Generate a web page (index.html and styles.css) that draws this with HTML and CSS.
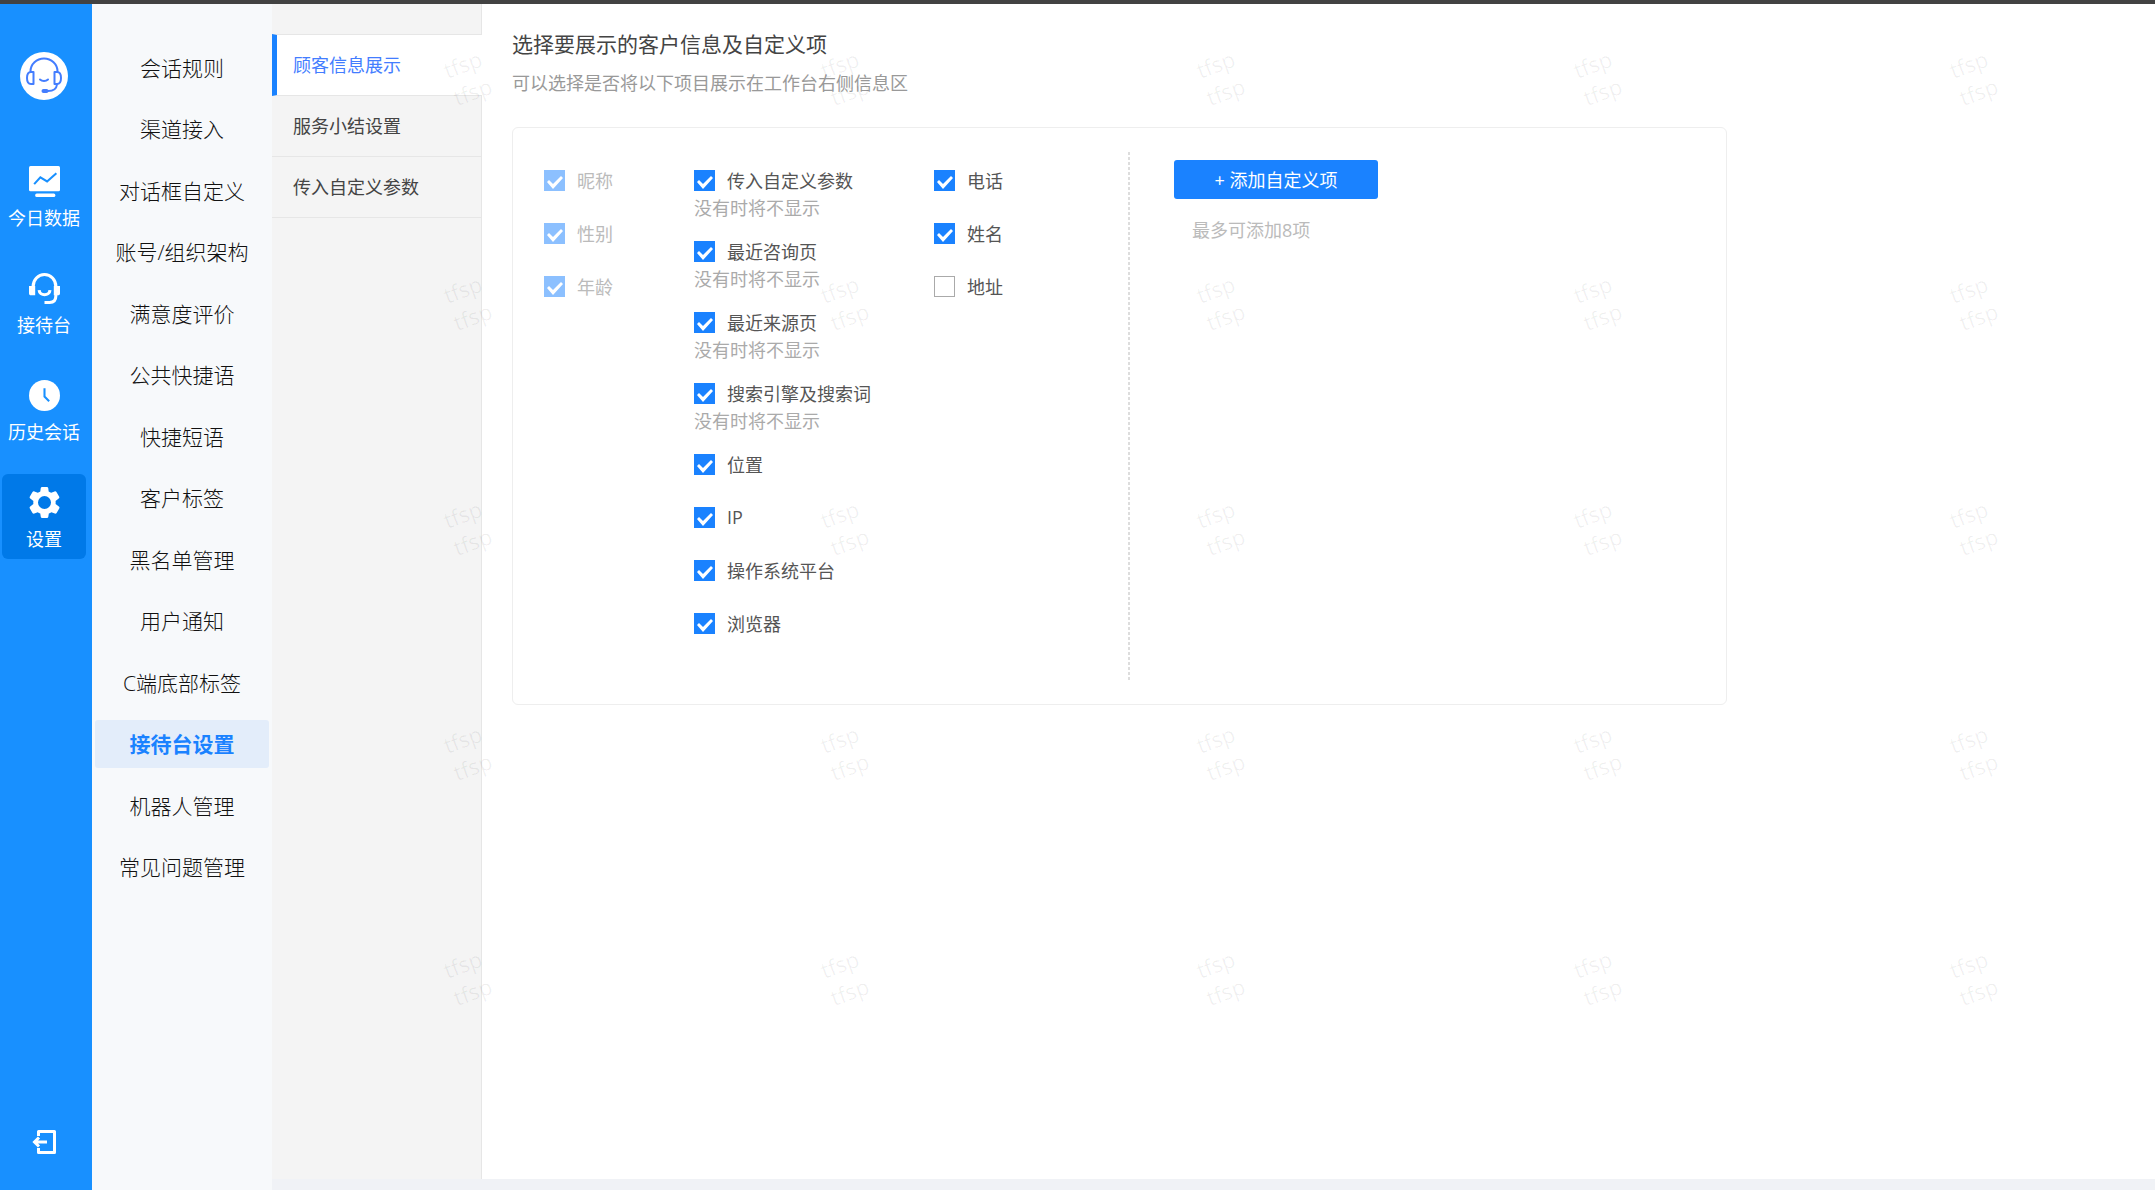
FILE: index.html
```html
<!DOCTYPE html>
<html lang="zh-CN">
<head>
<meta charset="utf-8">
<meta name="viewport" content="width=device-width, initial-scale=1">
<title>接待台设置</title>
<link rel="stylesheet" href="styles.css">
</head>
<body>
<div class="app">
  <nav class="rail" aria-label="主导航">
    <svg class="logo" viewBox="0 0 48 48" aria-hidden="true">
      <circle cx="24" cy="24" r="24" fill="#fff"/>
      <g fill="none" stroke="#437dff" stroke-width="2" stroke-linecap="round" stroke-linejoin="round">
        <path d="M10.500 19.500a13.500 13 0 0 1 27 0"/>
        <path d="M13.500 20v12h-2.500c-2.500 0-4-2.500-4-6s1.500-6 4-6z"/>
        <path d="M34.500 20v12h2.500c2.500 0 4-2.500 4-6s-1.500-6-4-6z"/>
        <path d="M20 27.500c2.200 2 5.800 2 8 0"/>
        <path d="M37 32.500c-.5 4.500-4 6.500-9 6.500"/>
      </g>
      <rect x="21.500" y="37" width="7" height="4" rx="2" fill="#437dff"/>
    </svg>
    <ul class="rail-list">
      <li><a class="rail-item" href="#data">
        <svg viewBox="0 0 30 30" aria-hidden="true"><rect width="30" height="24.500" rx="1.500" fill="#fff"/><rect x="6" y="26.500" width="19.500" height="3.500" rx="1.500" fill="#fff"/><path d="M5 17.500l6-6.500 6.500 4 9-8" fill="none" stroke="#1890ff" stroke-width="2"/></svg>
        <span>今日数据</span></a></li>
      <li><a class="rail-item" href="#desk">
        <svg viewBox="0 0 30 30" aria-hidden="true"><path d="M4 13a11 11.500 0 0 1 22 0v9c0 4-2 6.500-6 6.500h-5" fill="none" stroke="#fff" stroke-width="3"/><path d="M0 12.500h6v9H2c-1.300 0-2-.7-2-2zM30 12.500h-6v9h4c1.300 0 2-.7 2-2z" fill="#fff"/><path d="M9.800 16.500c.5 6 10 6 10.500 0" fill="none" stroke="#fff" stroke-width="3"/></svg>
        <span>接待台</span></a></li>
      <li><a class="rail-item" href="#history">
        <svg viewBox="0 0 30 30" aria-hidden="true"><circle cx="15" cy="15" r="15" fill="#fff"/><path d="M15 8v8l4.500 4.500" fill="none" stroke="#1890ff" stroke-width="2"/></svg>
        <span>历史会话</span></a></li>
      <li><a class="rail-item is-active" href="#settings" aria-current="page">
        <svg viewBox="2 2 20 20" aria-hidden="true"><path fill="#fff" d="M19.140 12.940c.04-.3.060-.61.060-.94s-.02-.64-.07-.94l2.030-1.580c.5-.4.500-.8.250-1.300l-1.700-2.900c-.25-.45-.7-.6-1.200-.4l-2.200.9c-.5-.38-1.030-.7-1.620-.94L14.400 2.600c-.1-.4-.4-.6-.8-.6h-3.200c-.4 0-.7.200-.8.600l-.31 2.240c-.59.240-1.130.570-1.620.940l-2.200-.9c-.5-.2-.95-.05-1.200.4l-1.700 2.900c-.25.500-.25.900.250 1.300l2.030 1.580c-.05.300-.09.630-.09.940s.02.640.07.940l-2.030 1.580c-.5.400-.5.800-.25 1.300l1.700 2.900c.25.450.7.600 1.200.4l2.200-.9c.5.380 1.030.7 1.620.94l.36 2.240c.1.400.4.600.8.600h3.200c.4 0 .7-.2.800-.6l.36-2.240c.59-.24 1.130-.56 1.620-.94l2.200.9c.5.200.95.050 1.200-.4l1.700-2.900c.25-.5.250-.9-.25-1.300zM12 16.200a4.200 4.200 0 1 1 0-8.400 4.200 4.200 0 0 1 0 8.400z"/></svg>
        <span>设置</span></a></li>
    </ul>
    <button class="logout" type="button" aria-label="退出">
      <svg viewBox="0 0 26 26" aria-hidden="true"><path d="M7.500 7V2.500h16v21h-16V19" fill="none" stroke="#fff" stroke-width="3" stroke-linejoin="round"/><path d="M4 13h12M8 8.500L3.500 13 8 17.500" fill="none" stroke="#fff" stroke-width="3"/></svg>
    </button>
  </nav>

  <nav class="menu" aria-label="设置菜单">
    <ul class="menu-list">
      <li><a href="#m1">会话规则</a></li>
      <li><a href="#m2">渠道接入</a></li>
      <li><a href="#m3">对话框自定义</a></li>
      <li><a href="#m4">账号/组织架构</a></li>
      <li><a href="#m5">满意度评价</a></li>
      <li><a href="#m6">公共快捷语</a></li>
      <li><a href="#m7">快捷短语</a></li>
      <li><a href="#m8">客户标签</a></li>
      <li><a href="#m9">黑名单管理</a></li>
      <li><a href="#m10">用户通知</a></li>
      <li><a href="#m11">C端底部标签</a></li>
      <li><a class="is-active" href="#m12" aria-current="page">接待台设置</a></li>
      <li><a href="#m13">机器人管理</a></li>
      <li><a href="#m14">常见问题管理</a></li>
    </ul>
  </nav>

  <div class="workspace">
    <nav class="tabs" aria-label="接待台设置">
      <a class="tab is-active" href="#t1" aria-current="page">顾客信息展示</a>
      <a class="tab" href="#t2">服务小结设置</a>
      <a class="tab" href="#t3">传入自定义参数</a>
    </nav>

    <main class="content">
      <h1 class="title">选择要展示的客户信息及自定义项</h1>
      <p class="subtitle">可以选择是否将以下项目展示在工作台右侧信息区</p>
      <section class="card">
        <div class="options">
          <ul class="option-list">
            <li><label class="check"><input type="checkbox" checked disabled><span>昵称</span></label></li>
            <li><label class="check"><input type="checkbox" checked disabled><span>性别</span></label></li>
            <li><label class="check"><input type="checkbox" checked disabled><span>年龄</span></label></li>
          </ul>
          <ul class="option-list">
            <li><label class="check"><input type="checkbox" checked><span>传入自定义参数</span></label><p class="note">没有时将不显示</p></li>
            <li><label class="check"><input type="checkbox" checked><span>最近咨询页</span></label><p class="note">没有时将不显示</p></li>
            <li><label class="check"><input type="checkbox" checked><span>最近来源页</span></label><p class="note">没有时将不显示</p></li>
            <li><label class="check"><input type="checkbox" checked><span>搜索引擎及搜索词</span></label><p class="note">没有时将不显示</p></li>
            <li><label class="check"><input type="checkbox" checked><span>位置</span></label></li>
            <li><label class="check"><input type="checkbox" checked><span>IP</span></label></li>
            <li><label class="check"><input type="checkbox" checked><span>操作系统平台</span></label></li>
            <li><label class="check"><input type="checkbox" checked><span>浏览器</span></label></li>
          </ul>
          <ul class="option-list">
            <li><label class="check"><input type="checkbox" checked><span>电话</span></label></li>
            <li><label class="check"><input type="checkbox" checked><span>姓名</span></label></li>
            <li><label class="check"><input type="checkbox"><span>地址</span></label></li>
          </ul>
        </div>
        <div class="divider"></div>
        <div class="custom">
          <button class="add" type="button">+ 添加自定义项</button>
          <p class="limit">最多可添加8项</p>
        </div>
      </section>
    </main>

    <div class="watermark" aria-hidden="true">
      <span>tfsp<br>tfsp</span><span>tfsp<br>tfsp</span><span>tfsp<br>tfsp</span><span>tfsp<br>tfsp</span><span>tfsp<br>tfsp</span>
      <span>tfsp<br>tfsp</span><span>tfsp<br>tfsp</span><span>tfsp<br>tfsp</span><span>tfsp<br>tfsp</span><span>tfsp<br>tfsp</span>
      <span>tfsp<br>tfsp</span><span>tfsp<br>tfsp</span><span>tfsp<br>tfsp</span><span>tfsp<br>tfsp</span><span>tfsp<br>tfsp</span>
      <span>tfsp<br>tfsp</span><span>tfsp<br>tfsp</span><span>tfsp<br>tfsp</span><span>tfsp<br>tfsp</span><span>tfsp<br>tfsp</span>
      <span>tfsp<br>tfsp</span><span>tfsp<br>tfsp</span><span>tfsp<br>tfsp</span><span>tfsp<br>tfsp</span><span>tfsp<br>tfsp</span>
    </div>
  </div>
</div>
</body>
</html>
```

FILE: styles.css
```css
* {
  box-sizing: border-box;
}

body {
  margin: 0;
  font-family: "Open Sans", "Noto Sans CJK SC", sans-serif;
  font-size: 18px;
  color: #444;
  background: #f0f2f6;
}

ul,
h1,
p {
  margin: 0;
  padding: 0;
  list-style: none;
}

a {
  color: inherit;
  text-decoration: none;
}

button {
  font: inherit;
  border: 0;
  padding: 0;
  cursor: pointer;
}

.app {
  display: flex;
  min-height: 100vh;
  border-top: 4px solid #424242;
}

/* Primary blue rail */
.rail {
  display: flex;
  flex-direction: column;
  flex: none;
  width: 92px;
  padding: 48px 6px 35px 2px;
  background: #1890ff;
}

.logo {
  width: 48px;
  height: 48px;
  margin: 0 auto 53px;
}

.rail-list {
  display: flex;
  flex-direction: column;
  gap: 22px;
}

.rail-item {
  display: flex;
  flex-direction: column;
  align-items: center;
  gap: 8px;
  height: 85px;
  padding-top: 13px;
  border-radius: 6px;
  line-height: 26px;
  color: #fff;
}

.rail-item svg {
  width: 31px;
  height: 31px;
}

.rail-item.is-active {
  background: #0079e8;
}

.logout {
  align-self: center;
  margin-top: auto;
  height: 26px;
  background: none;
}

.logout svg {
  display: block;
  width: 26px;
  height: 26px;
}

/* Settings menu */
.menu {
  flex: none;
  width: 180px;
  padding: 40px 3px;
  background: #f7f9fb;
}

.menu-list li {
  margin-bottom: 13px;
}

.menu-list li:nth-child(even) {
  margin-bottom: 14px;
}

.menu-list a {
  display: block;
  border-radius: 3px;
  font-size: 21px;
  font-weight: 300;
  line-height: 48px;
  text-align: center;
  color: #111;
}

.menu-list .is-active {
  background: #e3edfa;
  color: #1a82ff;
  font-weight: 700;
}

/* Sub tabs and content */
.workspace {
  position: relative;
  display: flex;
  flex: 1;
  margin-bottom: 11px;
  background: #fff;
}

.tabs {
  flex: none;
  width: 210px;
  padding-top: 30px;
  background: #f4f4f4;
  border-right: 1px solid #e6e6e6;
}

.tab {
  display: block;
  height: 61px;
  margin-right: -1px;
  padding-left: 21px;
  border-bottom: 1px solid #e6e6e6;
  line-height: 60px;
}

.tab.is-active {
  height: 62px;
  padding-left: 16px;
  border-top: 1px solid #e6e6e6;
  border-left: 5px solid #1a82ff;
  background: #fff;
  color: #437dff;
}

.content {
  flex: 1;
  padding: 24px 30px;
}

.title {
  font-size: 21px;
  font-weight: 400;
  line-height: 32px;
}

.subtitle {
  margin: 9px 0 30px;
  line-height: 28px;
  color: #999;
}

.card {
  display: flex;
  max-width: 1215px;
  padding: 24px 31px;
  border: 1px solid #eee;
  border-radius: 6px;
}

.options {
  display: flex;
  width: 584px;
  padding: 10px 0 38px;
}

.option-list {
  display: flex;
  flex-direction: column;
  gap: 16px;
  width: 150px;
}

.option-list:nth-child(2) {
  width: 240px;
}

.check {
  display: flex;
  align-items: center;
  gap: 12px;
  height: 37px;
  color: #555;
}

.check span {
  padding-bottom: 2px;
}

.check input {
  appearance: none;
  flex: none;
  width: 21px;
  height: 21px;
  margin: 0;
  border: 1px solid #aaa;
  background: #fff;
}

.check input:checked {
  border: 0;
  background: #1a82ff;
}

.check input:checked::before {
  content: "";
  display: block;
  height: 21px;
  background: #fff;
  clip-path: polygon(3px 12px, 5px 10px, 9px 14px, 17px 6px, 19px 8px, 9px 19px);
}

.check input:disabled {
  background: #8cc0ff;
}

.check input:disabled + span {
  color: #bbb;
}

.note {
  line-height: 18px;
  color: #aaa;
}

.divider {
  width: 2px;
  background: repeating-linear-gradient(#ddd 0 3px, transparent 3px 5px);
}

.custom {
  padding: 8px 0 0 44px;
}

.add {
  width: 204px;
  height: 39px;
  padding-bottom: 2px;
  border-radius: 3px;
  background: #1a82ff;
  color: #fff;
}

.limit {
  padding: 18px 18px 0;
  line-height: 26px;
  color: #bbb;
}

/* Repeated user watermark laid over the workspace */
.watermark {
  position: absolute;
  inset: 0;
  display: grid;
  grid-template-columns: repeat(5, 1fr);
  grid-auto-rows: 225px;
  overflow: hidden;
  pointer-events: none;
}

.watermark span {
  justify-self: start;
  align-self: start;
  margin: 45px 0 0 176px;
  font-size: 22px;
  line-height: 29px;
  color: rgba(0, 0, 0, 0.06);
  transform: rotate(-20deg);
}
```
